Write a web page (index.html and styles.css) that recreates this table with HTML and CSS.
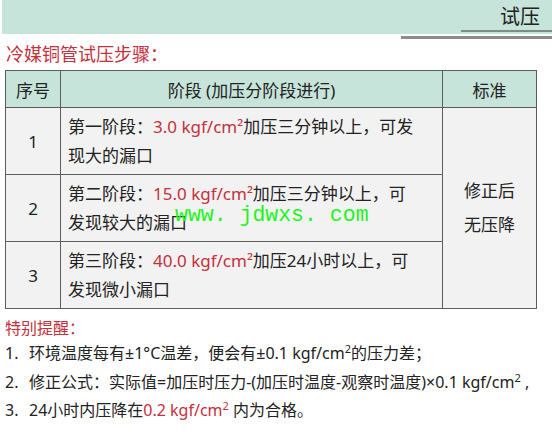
FILE: index.html
```html
<!DOCTYPE html>
<html lang="zh-CN">
<head>
    <meta charset="UTF-8">
    <meta name="viewport" content="width=device-width, initial-scale=1.0">
    <title>试压</title>
    <link rel="stylesheet" href="styles.css">
</head>
<body>
    <div class="page">
        <div class="top-bar">
            <span class="top-title">试压</span>
        </div>
        <div class="top-rule"></div>

        <h2 class="red-title">冷媒铜管试压步骤：</h2>

        <table class="steps">
            <tr class="head">
                <th class="col-no">序号</th>
                <th class="col-stage">阶段 (加压分阶段进行)</th>
                <th class="col-std">标准</th>
            </tr>
            <tr class="row">
                <td class="num">1</td>
                <td class="stage">第一阶段：<span class="red">3.0 kgf/cm²</span>加压三分钟以上，可发<br>现大的漏口</td>
                <td class="std" rowspan="3">修正后<br>无压降</td>
            </tr>
            <tr class="row">
                <td class="num">2</td>
                <td class="stage">第二阶段：<span class="red">15.0 kgf/cm²</span>加压三分钟以上，可<br>发现较大的漏口</td>
            </tr>
            <tr class="row">
                <td class="num">3</td>
                <td class="stage">第三阶段：<span class="red">40.0 kgf/cm²</span>加压24小时以上，可<br>发现微小漏口</td>
            </tr>
        </table>

        <div class="notes">
            <div class="notes-title">特别提醒：</div>
            <div class="note"><span class="idx">1.</span>环境温度每有±1°C温差，便会有±0.1 kgf/cm<sup>2</sup>的压力差；</div>
            <div class="note"><span class="idx">2.</span>修正公式：实际值=加压时压力-(加压时温度-观察时温度)×0.1 kgf/cm<sup>2</sup> ,</div>
            <div class="note"><span class="idx">3.</span>24小时内压降在<span class="red">0.2 kgf/cm<sup>2</sup></span> 内为合格。</div>
        </div>

        <div class="watermark">www. jdwxs. com</div>
    </div>
</body>
</html>
```

FILE: styles.css
```css
body {
    margin: 0;
    background: #fff;
    font-family: "Noto Sans", "Noto Sans CJK SC", sans-serif;
    color: #222;
}
.page {
    position: relative;
    width: 552px;
    height: 440px;
    overflow: hidden;
}
.top-bar {
    height: 34px;
    margin-left: 2px;
    background: #c6e4da;
    display: flex;
    justify-content: flex-end;
    align-items: flex-end;
}
.top-title {
    width: 79px;
    padding-right: 12px;
    margin-bottom: 2px;
    border-bottom: 2px solid #7d8c87;
    text-align: right;
    font-family: "Noto Sans CJK SC", sans-serif;
    font-size: 20px;
    line-height: 28px;
    color: #222;
}
.top-rule {
    height: 3px;
    margin: 2px 0 0 401px;
    background: #8b8e8d;
}
.red-title {
    margin: 2px 0 0 6px;
    font-family: "Noto Sans CJK SC", sans-serif;
    font-size: 18px;
    font-weight: normal;
    line-height: 24px;
    color: #c4303c;
}
.steps {
    margin: 5px 0 0 5px;
    width: 532px;
    border-collapse: collapse;
    background: #f2f2f2;
}
.steps th,
.steps td {
    border: 1px solid #5c5c5c;
    padding: 0;
}
.steps .head {
    height: 37px;
    background: #c6e4da;
}
.steps th {
    font-size: 17px;
    font-weight: normal;
    color: #222;
}
.col-no {
    width: 54px;
}
.col-std {
    width: 93px;
}
.steps .row {
    height: 67px;
}
.steps td.num {
    text-align: center;
    font-size: 17px;
}
.steps td.stage {
    padding-left: 7px;
    font-size: 17px;
    line-height: 29px;
}
.steps td.std {
    text-align: center;
    font-size: 17px;
    line-height: 34px;
}
.red {
    color: #c4303c;
}
.notes {
    margin: 8px 0 0 5px;
    font-size: 16px;
}
.notes-title {
    color: #c4303c;
    line-height: 22px;
}
.note {
    height: 28.5px;
    line-height: 28px;
}
.note .idx {
    display: inline-block;
    width: 24px;
}
.note sup {
    font-size: 11px;
    line-height: 0;
}
.watermark {
    position: absolute;
    left: 175px;
    top: 203px;
    font-family: "Liberation Mono", monospace;
    font-size: 21.5px;
    color: #1cf51c;
    white-space: pre;
}
```
